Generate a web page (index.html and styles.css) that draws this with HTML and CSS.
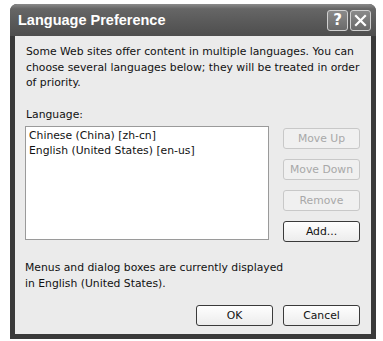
FILE: index.html
```html
<!DOCTYPE html>
<html>
<head>
<meta charset="utf-8">
<link rel="stylesheet" href="styles.css">
</head>
<body>
<div class="window">
  <div class="titlebar">
    <span class="title">Language Preference</span>
    <div class="caption-btns">
      <span class="cbtn help">?</span>
      <span class="cbtn close">
        <svg width="13" height="13" viewBox="0 0 13 13"><path d="M2 2 L11 11 M11 2 L2 11" stroke="#fff" stroke-width="2.2" stroke-linecap="square"/></svg>
      </span>
    </div>
  </div>
  <div class="body">
    <p class="intro">Some Web sites offer content in multiple languages. You can choose several languages below; they will be treated in order of priority.</p>
    <div class="label">Language:</div>
    <div class="row">
      <div class="listbox">
        <div class="item">Chinese (China) [zh-cn]</div>
        <div class="item">English (United States) [en-us]</div>
      </div>
      <div class="side">
        <button class="btn disabled">Move Up</button>
        <button class="btn disabled">Move Down</button>
        <button class="btn disabled">Remove</button>
        <button class="btn">Add...</button>
      </div>
    </div>
    <p class="note">Menus and dialog boxes are currently displayed<br>in English (United States).</p>
    <div class="footer">
      <button class="btn">OK</button>
      <button class="btn">Cancel</button>
    </div>
  </div>
</div>
</body>
</html>
```
FILE: styles.css
```css
html, body { margin: 0; padding: 0; background: #fff; }
body { font-family: "DejaVu Sans", "Liberation Sans", sans-serif; font-size: 10.8px; color: #111; }
.window {
  margin: 4px 0 0 10px;
  width: 366px;
  height: 335px;
  background: #3a3a3a;
  border-radius: 7px 7px 0 0;
  display: flex;
  flex-direction: column;
  box-sizing: border-box;
  padding: 0 5px 5px 5px;
}
.titlebar {
  height: 32px;
  display: flex;
  align-items: center;
  justify-content: space-between;
  margin: 0 -5px;
  padding: 0 5px 0 8px;
  border-radius: 7px 7px 0 0;
  background: linear-gradient(#8a8a8a 0%, #666 15%, #5a5a5a 55%, #4e4e4e 100%);
}
.title {
  color: #fff;
  font-family: "Liberation Sans", sans-serif;
  font-weight: bold;
  font-size: 14.5px;
}
.caption-btns { display: flex; gap: 2px; }
.cbtn {
  width: 19px; height: 19px;
  border: 1px solid #d0d0d0;
  border-radius: 3px;
  background: linear-gradient(#8a8a8a, #6a6a6a);
  color: #fff;
  font: bold 15px "DejaVu Sans", sans-serif;
  display: flex; align-items: center; justify-content: center;
}
.body {
  flex: 1;
  background: #ebebeb;
  padding: 8px 10px 0 11px;
  box-sizing: border-box;
}
.intro { margin: 0; line-height: 15.5px; width: 345px; }
.label { margin-top: 16px; line-height: 15px; }
.row { display: flex; margin-top: 4px; }
.listbox {
  width: 244px; height: 114px;
  background: #fff;
  border: 1px solid #9a9a9a;
  margin-left: -1px;
  padding: 1px 3px;
  box-sizing: border-box;
}
.item { line-height: 15px; }
.side {
  display: flex; flex-direction: column; gap: 10px;
  margin-left: 14px; margin-top: 2px;
}
.btn {
  width: 77px; height: 21px;
  font: 10.8px "DejaVu Sans", sans-serif;
  color: #111;
  background: linear-gradient(#fefefe, #ececec);
  border: 1px solid #3a3a3a;
  border-radius: 3px;
  padding: 0;
}
.btn.disabled { color: #a8a8a8; border-color: #c8c8c8; background: #f0f0f0; }
.note { margin: 18px 0 0 -1px; line-height: 16px; }
.footer { display: flex; justify-content: flex-end; gap: 10px; margin-top: 13px; padding-right: 1px; }
```
